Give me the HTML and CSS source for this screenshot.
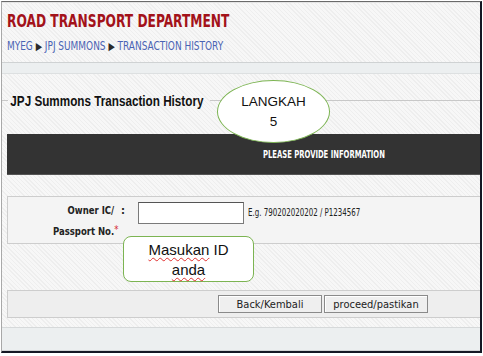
FILE: index.html
```html
<!DOCTYPE html>
<html lang="en">
<head>
  <meta charset="UTF-8">
  <title>JPJ Summons Transaction History</title>
  <link rel="stylesheet" href="styles.css">
</head>
<body>
  <div class="frame">
    <div class="top">
      <h1 class="dept"><span>ROAD TRANSPORT DEPARTMENT</span></h1>
      <div class="crumbs"><span>MYEG <b class="sep">&#9654;</b> JPJ SUMMONS <b class="sep">&#9654;</b> TRANSACTION HISTORY</span></div>
    </div>
    <div class="band"></div>

    <div class="content">
      <div class="legend">
        <span class="rule short"></span>
        <span class="legend-text">JPJ Summons Transaction History</span>
        <span class="rule"></span>
      </div>

      <div class="infobar"><span>PLEASE PROVIDE INFORMATION</span></div>

      <div class="formbox">
        <div class="label"><span>Owner IC/<br>Passport No.<span class="req">*</span></span></div>
        <div class="colon">:</div>
        <input type="text" class="field">
        <div class="hint">E.g. 790202020202 / P1234567</div>
      </div>

      <div class="actions">
        <button class="btn">Back/Kembali</button>
        <button class="btn">proceed/pastikan</button>
      </div>
    </div>

    <div class="band bottom"></div>

    <div class="callout step">LANGKAH<br>5</div>
    <div class="callout note"><u>Masukan</u> ID<br><u>anda</u></div>
  </div>
</body>
</html>
```

FILE: styles.css
```css
body {
  margin: 0;
  background: #fff;
  font-family: "DejaVu Sans Condensed", "DejaVu Sans", sans-serif;
  font-stretch: condensed;
  color: #222;
}

.frame {
  position: relative;
  width: 478px;
  height: 349px;
  margin: 1px 0 0 1px;
  border-top: 1px solid #6a6a6a;
  border-left: 1px solid #a8a8a8;
  border-right: 2px solid #141824;
  border-bottom: 2px solid #141824;
  background: repeating-linear-gradient(45deg, #f7f7f7 0, #f7f7f7 2px, #eeeeee 2px, #eeeeee 3px);
}

.top {
  height: 59px;
  border-top: 1px solid #e4e4e4;
  border-bottom: 1px solid #cfd2d3;
  padding-left: 5px;
}

.dept {
  margin: 0;
  padding-top: 8px;
  height: 22px;
  font-size: 17px;
  font-weight: bold;
  color: #a3121a;
  white-space: nowrap;
}

.dept span {
  display: inline-block;
  transform: scaleX(0.8);
  transform-origin: left center;
}

.crumbs {
  margin-top: 6px;
  font-size: 12px;
  color: #4a63b4;
  white-space: nowrap;
}

.crumbs span {
  display: inline-block;
  transform: scaleX(0.83);
  transform-origin: left center;
}

.sep {
  font-size: 11px;
  color: #2a2a2a;
}

.band {
  height: 10px;
  background: #eceff0;
  border-bottom: 1px solid #dde0e1;
}

.content {
  padding: 18px 0 0 5px;
  height: 235px;
}

.legend {
  display: flex;
  align-items: center;
  margin-left: -5px;
  height: 16px;
}

.rule {
  flex: 1;
  height: 1px;
  background: #c8c8c8;
}

.rule.short {
  flex: 0 0 6px;
}

.legend-text {
  padding: 0 3px;
  font-family: "Liberation Sans", Arial, sans-serif;
  font-size: 15px;
  font-weight: bold;
  color: #111;
  display: inline-block;
  transform: scaleX(0.78);
  transform-origin: left center;
  margin-right: -52px;
}

.infobar {
  margin-top: 26px;
  height: 40px;
  background: #333;
  border-bottom: 1px solid #555;
  display: flex;
  align-items: center;
  padding-left: 256px;
  color: #fff;
  font-size: 11px;
  font-weight: bold;
  white-space: nowrap;
}

.infobar span {
  display: inline-block;
  transform: scaleX(0.69);
  transform-origin: left center;
}

.formbox {
  margin-top: 21px;
  height: 44px;
  background: #f4f4f4;
  border: 1px solid #cdcdcd;
  border-right: none;
  display: flex;
  align-items: flex-start;
  padding-top: 2px;
}

.label {
  width: 106px;
  text-align: right;
  font-size: 11px;
  font-weight: bold;
  line-height: 19px;
  color: #222;
  padding-top: 2px;
  white-space: nowrap;
}

.label > span {
  display: inline-block;
  transform: scaleX(0.86);
  transform-origin: right center;
}

.req {
  color: #d42a2a;
  font-weight: normal;
  vertical-align: 2px;
  margin-right: -5px;
}

.colon {
  width: 19px;
  padding: 2px 8px 0 0;
  box-sizing: border-box;
  text-align: right;
  font-size: 11px;
  font-weight: bold;
  line-height: 19px;
}

.field {
  width: 106px;
  height: 22px;
  margin: 3px 0 0 5px;
  padding: 0;
  border: 1px solid #7a7a7a;
  border-top-color: #555;
  background: #fff;
  box-sizing: border-box;
}

.hint {
  margin-left: 4px;
  font-size: 11px;
  line-height: 19px;
  padding-top: 4px;
  white-space: nowrap;
  transform: scaleX(0.715);
  transform-origin: left center;
}

.actions {
  margin-top: 46px;
  height: 26px;
  background: #eeeeee;
  border: 1px solid #cdcdcd;
  border-right: none;
  display: flex;
  align-items: center;
  gap: 2px;
  padding-left: 210px;
}

.btn {
  width: 104px;
  height: 18px;
  padding: 0;
  background: #efefef;
  border: 1px solid #8a8a8a;
  box-shadow: inset 1px 1px 0 #fff;
  font-family: "DejaVu Sans Condensed", "DejaVu Sans", sans-serif;
  font-stretch: condensed;
  font-size: 11px;
  color: #222;
}

.band.bottom {
  height: 22px;
  border-top: 1px solid #d6d9da;
  border-bottom: 1px solid #cfd2d3;
}

.callout {
  position: absolute;
  background: #fff;
  border: 1.5px solid #7cb452;
  font-family: "Liberation Sans", Arial, sans-serif;
  color: #111;
  text-align: center;
  box-sizing: border-box;
}

.step {
  left: 215px;
  top: 78px;
  width: 113px;
  height: 63px;
  border-radius: 50%;
  font-size: 13.5px;
  line-height: 20px;
  padding-top: 11px;
}

.note {
  left: 121px;
  top: 234px;
  width: 131px;
  height: 46px;
  border-radius: 8px;
  font-size: 15px;
  line-height: 20px;
  padding-top: 3px;
}

.note u {
  text-decoration: underline wavy #e03030;
  text-decoration-thickness: 1px;
  text-underline-offset: 2px;
}
```
